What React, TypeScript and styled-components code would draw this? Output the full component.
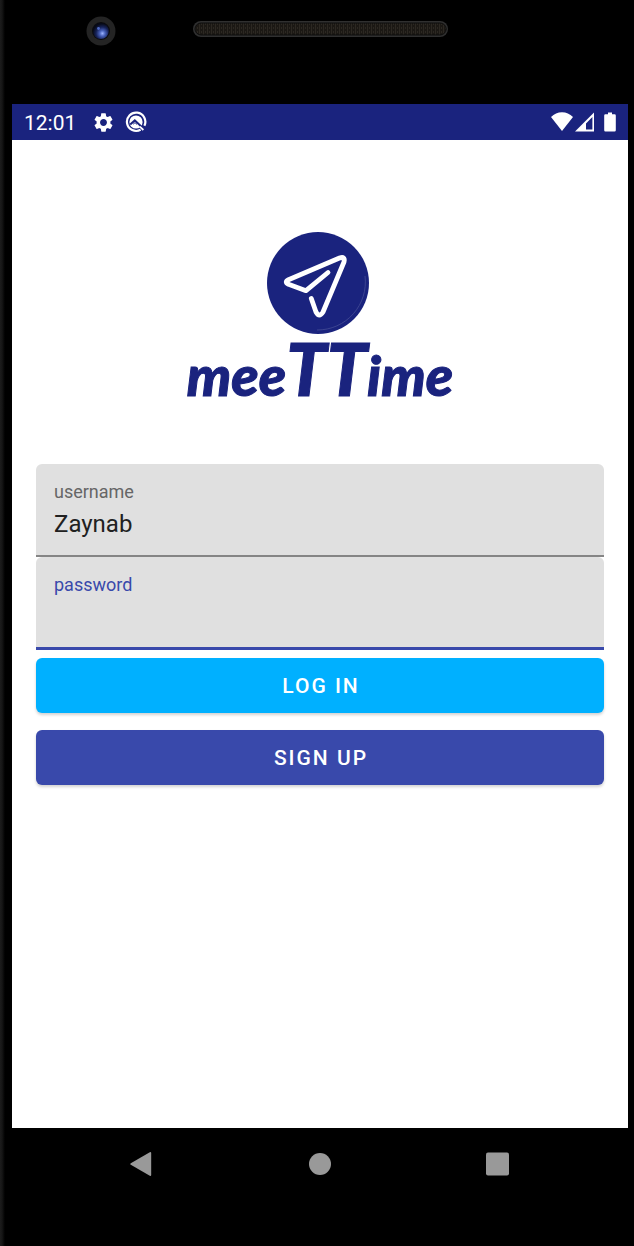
import React, { useState } from "react";
import styled, { createGlobalStyle } from "styled-components";
import { MdSettings } from "react-icons/md";

const GlobalStyle = createGlobalStyle`
  *, *::before, *::after { box-sizing: border-box; }
  body { margin: 0; background: #000; font-family: Roboto, "Liberation Sans", sans-serif; }
`;

const Device = styled.div`
  min-height: 100vh;
  display: flex;
  flex-direction: column;
  padding: 0 6px 0 12px;
  background: linear-gradient(90deg, #1c1c1c 0, #161616 2px, #000 5px);
`;

const Bezel = styled.header`
  height: 104px;
  padding: 0 180px 46px 74px;
  display: flex;
  align-items: center;
  gap: 77px;
`;

const Camera = styled.svg`
  flex: none;
  width: 30px;
  height: 34px;
`;

const Speaker = styled.svg`
  flex: 1;
  min-width: 0;
  height: 16px;
`;

const Screen = styled.div`
  flex: 1;
  display: flex;
  flex-direction: column;
  background: #fff;
`;

const StatusBar = styled.div`
  height: 36px;
  padding: 0 12px;
  display: flex;
  align-items: center;
  justify-content: space-between;
  background: #1a237e;
  color: #fff;
`;

const StatusGroup = styled.div<{ $gap: number }>`
  display: flex;
  align-items: center;
  gap: ${(p) => p.$gap}px;

  svg { display: block; }
`;

const Clock = styled.time`
  font-size: 21px;
  line-height: 36px;
  padding-top: 1px;
  margin-right: 6px;
`;

const Content = styled.main`
  padding: 92px 24px 24px;
  display: flex;
  flex-direction: column;
`;

const Brand = styled.div`
  height: 232px;
  display: flex;
  flex-direction: column;
  align-items: center;
`;

const BrandMark = styled.svg`
  flex: none;
  width: 106px;
  height: 102px;
`;

const BrandName = styled.h1`
  margin: 0;
  font-family: Lato, "Liberation Sans", sans-serif;
  font-size: 56px;
  font-style: italic;
  font-weight: 900;
  line-height: 68px;
  color: #1a237e;
  -webkit-text-stroke: 1px #1a237e;

  span { font-size: 72px; }
`;

const Form = styled.form`
  display: flex;
  flex-direction: column;
`;

const Field = styled.label<{ $active?: boolean }>`
  height: 93px;
  padding: 18px 18px 0;
  display: flex;
  flex-direction: column;
  border-bottom: ${(p) => (p.$active ? "3px solid #3949ab" : "2px solid #858585")};
  border-radius: 6px 6px 0 0;
  background: #e0e0e0;
  background-clip: padding-box;
  color: ${(p) => (p.$active ? "#3949ab" : "#666")};
  font-size: 18px;
  line-height: 20px;
`;

const FieldInput = styled.input`
  width: 100%;
  height: 28px;
  margin-top: 8px;
  padding: 0;
  border: 0;
  outline: 0;
  background: transparent;
  color: #212121;
  font: 24px/28px Roboto, "Liberation Sans", sans-serif;
`;

const Actions = styled.div`
  margin-top: 8px;
  display: flex;
  flex-direction: column;
  gap: 17px;
`;

const ActionButton = styled.button<{ $color: string }>`
  height: 55px;
  padding: 1px 0 0 2px;
  border: 0;
  border-radius: 6px;
  background: ${(p) => p.$color};
  box-shadow: 0 2px 3px rgba(0, 0, 0, 0.18);
  color: #fff;
  font: 500 21px/24px Roboto, "Liberation Sans", sans-serif;
  letter-spacing: 2px;
  cursor: pointer;
`;

const NavBar = styled.nav`
  height: 118px;
  padding-bottom: 46px;
  display: flex;
  align-items: center;
  justify-content: center;
  gap: 25%;
`;

const NavButton = styled.button`
  width: 24px;
  height: 24px;
  padding: 0;
  border: 0;
  background: none;
  color: #999;
  cursor: pointer;

  svg { display: block; }
`;

function DeviceTop() {
  return (
    <Bezel>
      <Camera viewBox="0 0 30 34" aria-hidden="true">
        <defs>
          <radialGradient id="lens" cx="0.6" cy="0.65" r="0.6">
            <stop offset="0" stopColor="#9db4ff" />
            <stop offset="0.28" stopColor="#4a63bd" />
            <stop offset="0.65" stopColor="#17235a" />
            <stop offset="1" stopColor="#070a18" />
          </radialGradient>
        </defs>
        <circle cx="15" cy="19" r="14.5" fill="#242424" />
        <circle cx="15" cy="19" r="9" fill="#0b0b0e" />
        <circle cx="14.8" cy="19" r="8" fill="url(#lens)" />
        <circle cx="12.5" cy="16.5" r="1.4" fill="#4f6ac4" />
      </Camera>
      <Speaker aria-hidden="true">
        <defs>
          <pattern id="mesh" width="4" height="4" patternUnits="userSpaceOnUse">
            <rect width="4" height="4" fill="#1b1814" />
            <path d="M0.5 0v4M2.5 0v2" stroke="#2c2822" strokeWidth="1" />
          </pattern>
        </defs>
        <rect width="100%" height="16" rx="8" fill="#303030" />
        <svg x="2" y="2" width="100%" height="12" overflow="visible">
          <rect width="98.5%" height="12" rx="6" fill="url(#mesh)" stroke="#0c0c0c" />
        </svg>
      </Speaker>
    </Bezel>
  );
}

function DebugIcon() {
  return (
    <svg width="22" height="22" viewBox="0 0 22 22" fill="none" stroke="currentColor" aria-hidden="true">
      <path d="M15.6 18.8A9.2 9.2 0 1 1 19.4 14.8" strokeWidth="2.2" />
      <circle cx="11" cy="11" r="6.6" fill="currentColor" stroke="none" />
      <path d="M5.2 13.6L9.8 9.4L18.6 17.8" stroke="#1a237e" strokeWidth="2" />
      <path d="M8.2 13.2L10 11.6L12 13.4" stroke="#1a237e" strokeWidth="1" />
      <path d="M14.8 15.6L18.4 19" strokeWidth="1.8" />
    </svg>
  );
}

function WifiIcon() {
  return (
    <svg width="22" height="20" viewBox="0 0 22 20" fill="currentColor" aria-hidden="true">
      <path d="M0 4.9Q4.7 0.2 11 0.2T22 4.9L11 19Z" />
    </svg>
  );
}

function SignalIcon() {
  return (
    <svg width="20" height="20" viewBox="0 0 20 20" fill="currentColor" aria-hidden="true">
      <path fillRule="evenodd" d="M19 0.5V19.5H0ZM17.4 5L11 11.4V17.6H17.4Z" />
    </svg>
  );
}

function BatteryIcon() {
  return (
    <svg width="19" height="20" viewBox="0 0 19 20" fill="currentColor" aria-hidden="true">
      <path d="M11 0.5H15V2.2H17.6Q18.8 2.2 18.8 3.4V18.3Q18.8 19.5 17.6 19.5H8.4Q7.2 19.5 7.2 18.3V3.4Q7.2 2.2 8.4 2.2H11Z" />
    </svg>
  );
}

export default function App() {
  const [username, setUsername] = useState("Zaynab");
  const [password, setPassword] = useState("");

  return (
    <>
      <GlobalStyle />
      <Device>
        <DeviceTop />
        <Screen>
          <StatusBar>
            <StatusGroup $gap={10}>
              <Clock>12:01</Clock>
              <MdSettings size={23} aria-hidden="true" />
              <DebugIcon />
            </StatusGroup>
            <StatusGroup $gap={2}>
              <WifiIcon />
              <SignalIcon />
              <BatteryIcon />
            </StatusGroup>
          </StatusBar>
          <Content>
            <Brand>
              <BrandMark viewBox="0 0 106 102" aria-hidden="true">
                <circle cx="51" cy="51" r="51" fill="#1a237e" />
                <path d="M98 44A48 48 0 0 1 50 98" fill="none" stroke="#3c4491" strokeWidth="1" />
                <path
                  d="M61 40.5L39 58.7L21.5 52.3Q17 50 21.5 47.7L72.5 26Q78.5 24 77 30L56 80Q52.3 86 49 80L44.3 66.5"
                  fill="none"
                  stroke="#fff"
                  strokeWidth="4.8"
                  strokeLinecap="round"
                  strokeLinejoin="round"
                />
              </BrandMark>
              <BrandName>
                mee<span>TT</span>ime
              </BrandName>
            </Brand>
            <Form onSubmit={(e) => e.preventDefault()}>
              <Field>
                username
                <FieldInput
                  type="text"
                  autoComplete="username"
                  value={username}
                  onChange={(e) => setUsername(e.target.value)}
                />
              </Field>
              <Field $active>
                password
                <FieldInput
                  type="password"
                  autoComplete="current-password"
                  value={password}
                  onChange={(e) => setPassword(e.target.value)}
                />
              </Field>
              <Actions>
                <ActionButton type="submit" $color="#00b0ff">LOG IN</ActionButton>
                <ActionButton type="button" $color="#3949ab">SIGN UP</ActionButton>
              </Actions>
            </Form>
          </Content>
        </Screen>
        <NavBar>
          <NavButton type="button" aria-label="Back">
            <svg width="24" height="24" viewBox="0 0 24 24" fill="currentColor">
              <path d="M0.8 11.2L19.8 0.2Q21.2 -0.3 21.2 1V23Q21.2 24.3 19.8 23.8L0.8 12.8Q-0.3 12 0.8 11.2Z" />
            </svg>
          </NavButton>
          <NavButton type="button" aria-label="Home">
            <svg width="24" height="24" viewBox="0 0 24 24" fill="currentColor">
              <circle cx="12" cy="12" r="11" />
            </svg>
          </NavButton>
          <NavButton type="button" aria-label="Recent apps">
            <svg width="24" height="24" viewBox="0 0 24 24" fill="currentColor">
              <rect x="0" y="0.5" width="23" height="23" rx="2" />
            </svg>
          </NavButton>
        </NavBar>
      </Device>
    </>
  );
}
